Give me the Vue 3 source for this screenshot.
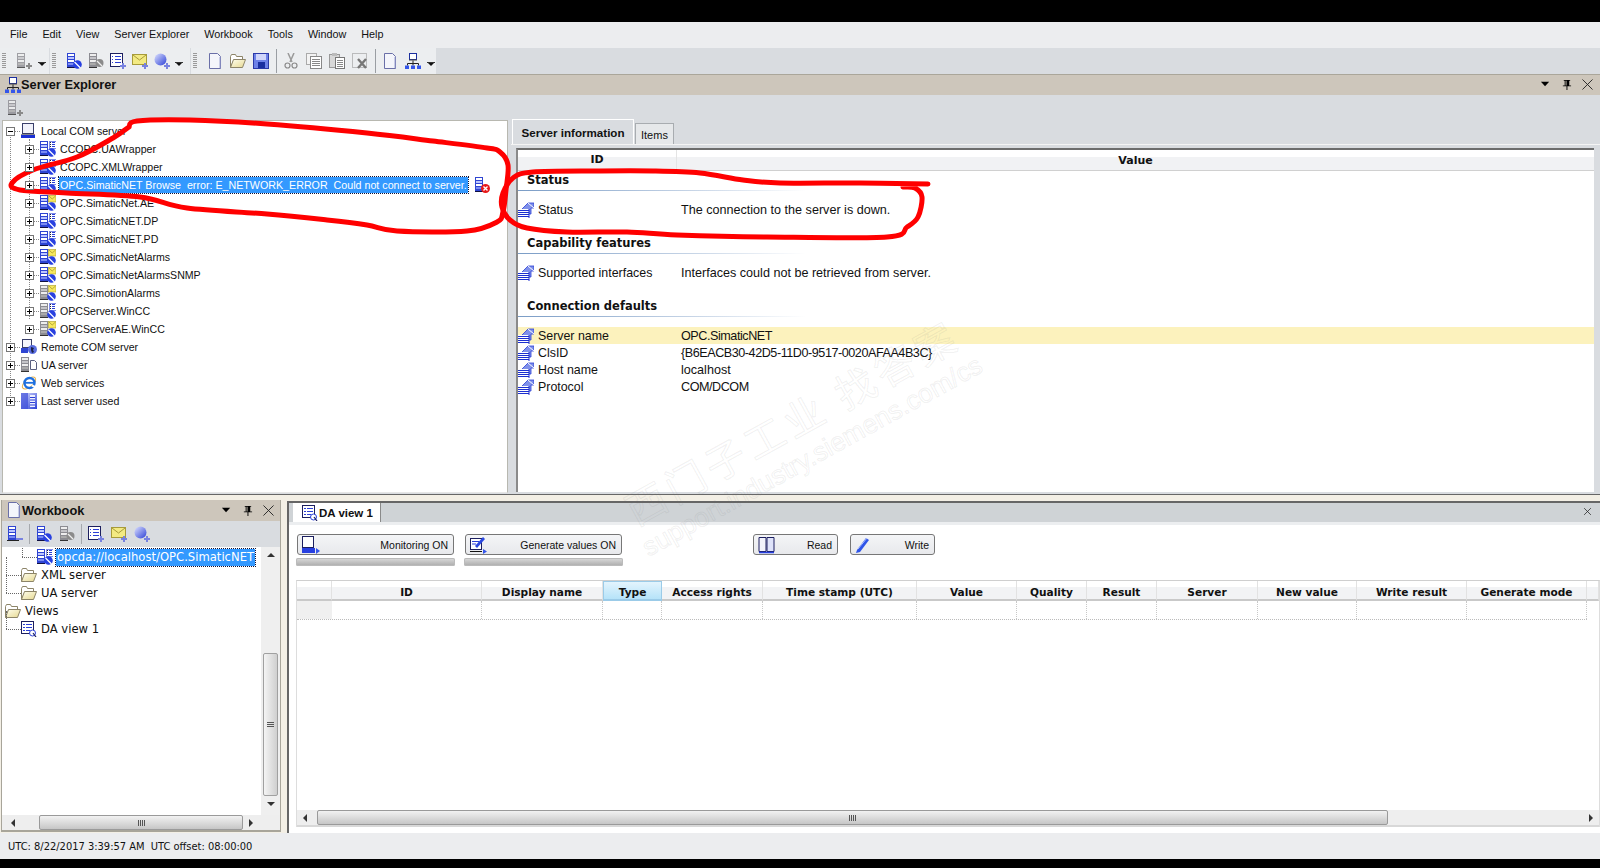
<script setup>
const menus = ['File', 'Edit', 'View', 'Server Explorer', 'Workbook', 'Tools', 'Window', 'Help']

const tb1 = ['i-srv-add']
const tb2 = ['i-srv-blue', 'i-srv-gray', 'i-list-add', 'i-env-add', 'i-globe-add']
const tb3a = ['i-doc', 'i-folder', 'i-floppy']
const tb3b = ['i-cut', 'i-copy', 'i-paste', 'i-del']
const tb3c = ['i-doc', 'i-net']

const children = [
  { t: 'CCOPC.UAWrapper', i: 'i-da' },
  { t: 'CCOPC.XMLWrapper', i: 'i-da' },
  { t: 'OPC.SimaticNET Browse  error: E_NETWORK_ERROR  Could not connect to server.', i: 'i-da', sel: true },
  { t: 'OPC.SimaticNet.AE', i: 'i-ae' },
  { t: 'OPC.SimaticNET.DP', i: 'i-da' },
  { t: 'OPC.SimaticNET.PD', i: 'i-da' },
  { t: 'OPC.SimaticNetAlarms', i: 'i-ae' },
  { t: 'OPC.SimaticNetAlarmsSNMP', i: 'i-ae' },
  { t: 'OPC.SimotionAlarms', i: 'i-gae' },
  { t: 'OPCServer.WinCC', i: 'i-gda' },
  { t: 'OPCServerAE.WinCC', i: 'i-gae' }
]
const roots = [
  { t: 'Remote COM server', i: 'i-remote' },
  { t: 'UA server', i: 'i-ua' },
  { t: 'Web services', i: 'i-ie' },
  { t: 'Last server used', i: 'i-last' }
]

const groups = [
  { h: 'Status', rows: [{ k: 'Status', v: 'The connection to the server is down.' }] },
  { h: 'Capability features', rows: [{ k: 'Supported interfaces', v: 'Interfaces could not be retrieved from server.' }] },
  {
    h: 'Connection defaults',
    rows: [
      { k: 'Server name', v: 'OPC.SimaticNET', hl: true, tight: true },
      { k: 'ClsID', v: '{B6EACB30-42D5-11D0-9517-0020AFAA4B3C}', tight: true },
      { k: 'Host name', v: 'localhost' },
      { k: 'Protocol', v: 'COM/DCOM', tight: true }
    ]
  }
]

const cols = [
  { t: '', w: 35 }, { t: 'ID', w: 150 }, { t: 'Display name', w: 121 }, { t: 'Type', w: 59, on: true },
  { t: 'Access rights', w: 101 }, { t: 'Time stamp (UTC)', w: 154 }, { t: 'Value', w: 100 },
  { t: 'Quality', w: 70 }, { t: 'Result', w: 70 }, { t: 'Server', w: 101 }, { t: 'New value', w: 99 },
  { t: 'Write result', w: 110 }, { t: 'Generate mode', w: 120 }
]

function smooth(pts) {
  let d = `M${pts[0][0]} ${pts[0][1]}`
  for (let i = 0; i < pts.length - 1; i++) {
    const p0 = pts[Math.max(0, i - 1)]
    const p1 = pts[i]
    const p2 = pts[i + 1]
    const p3 = pts[Math.min(pts.length - 1, i + 2)]
    const c1x = p1[0] + (p2[0] - p0[0]) / 6
    const c1y = p1[1] + (p2[1] - p0[1]) / 6
    const c2x = p2[0] - (p3[0] - p1[0]) / 6
    const c2y = p2[1] - (p3[1] - p1[1]) / 6
    d += ` C${c1x.toFixed(1)} ${c1y.toFixed(1)} ${c2x.toFixed(1)} ${c2y.toFixed(1)} ${p2[0]} ${p2[1]}`
  }
  return d
}
const loop1 = smooth([[129, 127], [137, 121], [190, 120], [267, 124], [367, 133], [433, 141], [487, 148], [500, 152], [508, 165], [506, 190], [503, 212], [497, 222], [467, 231], [397, 231], [367, 225], [327, 220], [267, 214], [187, 208], [140, 197], [67, 193], [20, 190], [12, 183], [33, 170], [77, 157], [113, 138], [129, 127]])
const loop2 = smooth([[928, 184], [860, 183], [780, 183], [743, 180], [700, 173], [653, 171], [600, 171], [533, 172], [513, 178], [503, 193], [502, 207], [510, 220], [527, 228], [567, 232], [627, 232], [677, 235], [767, 237], [887, 237], [907, 227], [918, 217], [922, 197], [915, 188], [903, 187]])
</script>

<template>
  <div class="app">
    <svg class="defs" width="0" height="0" aria-hidden="true">
      <defs>
        <linearGradient id="gBlue" x1="0" y1="0" x2="1" y2="1"><stop offset="0" stop-color="#dfe3ff" /><stop offset="1" stop-color="#2b3fd6" /></linearGradient>
        <linearGradient id="gFold" x1="0" y1="0" x2="1" y2="1"><stop offset="0" stop-color="#fffff0" /><stop offset="1" stop-color="#e6d890" /></linearGradient>
        <g id="towerBlue" shape-rendering="crispEdges">
          <rect x="0" y="0" width="8" height="15" fill="#2f45d2" />
          <rect x="1" y="1" width="6" height="2" fill="#fff" /><rect x="1" y="4" width="6" height="2" fill="#bcc6ff" />
          <rect x="1" y="7" width="6" height="2" fill="#fff" /><rect x="1" y="10" width="6" height="2" fill="#7b8cf2" />
          <rect x="0" y="14" width="8" height="1" fill="#101040" />
        </g>
        <g id="towerGray" shape-rendering="crispEdges">
          <rect x="0" y="0" width="8" height="15" fill="#8c8c92" />
          <rect x="1" y="1" width="6" height="2" fill="#eee" /><rect x="1" y="4" width="6" height="2" fill="#c4c4c8" />
          <rect x="1" y="7" width="6" height="2" fill="#eee" /><rect x="1" y="10" width="6" height="2" fill="#aaa" />
          <rect x="0" y="14" width="8" height="1" fill="#333" />
        </g>
        <g id="listMini" shape-rendering="crispEdges">
          <rect x="9" y="0" width="7" height="7" fill="#fff" stroke="#2b3fd6" stroke-width=".6" />
          <rect x="10" y="1" width="1" height="1" fill="#223" /><rect x="12" y="1" width="3" height="1" fill="#2b3fd6" />
          <rect x="10" y="3" width="1" height="1" fill="#223" /><rect x="12" y="3" width="3" height="1" fill="#2b3fd6" />
          <rect x="10" y="5" width="1" height="1" fill="#223" /><rect x="12" y="5" width="3" height="1" fill="#2b3fd6" />
        </g>
        <g id="envMini">
          <rect x="8.5" y="0.5" width="7.5" height="6.5" fill="#f6e85e" stroke="#b6a93a" stroke-width=".7" />
          <path d="M9 1l3.2 3 3.3-3" fill="none" stroke="#a89a30" stroke-width=".8" />
        </g>
        <g id="ball">
          <circle cx="11.5" cy="11.5" r="4.3" fill="#2840e0" />
          <path d="M8.5 9l6 6" stroke="#fff" stroke-width="1.3" />
        </g>
        <symbol id="i-da" viewBox="0 0 16 16"><use href="#towerBlue" /><use href="#listMini" /><use href="#ball" /></symbol>
        <symbol id="i-ae" viewBox="0 0 16 16"><use href="#towerBlue" /><use href="#envMini" /><use href="#ball" /></symbol>
        <symbol id="i-gda" viewBox="0 0 16 16"><use href="#towerGray" /><use href="#listMini" /><use href="#ball" /></symbol>
        <symbol id="i-gae" viewBox="0 0 16 16"><use href="#towerGray" /><use href="#envMini" /><use href="#ball" /></symbol>
        <symbol id="i-err" viewBox="0 0 16 16">
          <use href="#towerBlue" />
          <circle cx="10.5" cy="11.5" r="4.5" fill="#e81818" />
          <path d="M8.5 9.5l4 4m0-4l-4 4" stroke="#fff" stroke-width="1.4" />
        </symbol>
        <symbol id="i-local" viewBox="0 0 16 16">
          <rect x="1.5" y=".5" width="11" height="10" fill="#f1f2fa" stroke="#3a3f6a" />
          <rect x="0" y="11" width="14" height="1" fill="#888" />
          <rect x="0" y="12" width="14" height="3" fill="#1a2fd4" />
        </symbol>
        <symbol id="i-remote" viewBox="0 0 16 16">
          <rect x="1.5" y=".5" width="9" height="8" fill="#f4f5fb" stroke="#3a3f6a" />
          <rect x="0" y="9" width="7" height="5" fill="#2f45d2" />
          <circle cx="11.5" cy="10.5" r="4.5" fill="#5a6ee0" />
          <path d="M10 8l3 1-1 2 1 2-2 1-1-3z" fill="#1b2146" />
        </symbol>
        <symbol id="i-ua" viewBox="0 0 16 16">
          <use href="#towerGray" />
          <path d="M9.5 3.5h4l2 2v7h-6z" fill="#fff" stroke="#5a6080" />
        </symbol>
        <symbol id="i-ie" viewBox="0 0 16 16">
          <ellipse cx="8" cy="8" rx="8" ry="4" transform="rotate(-40 8 8)" fill="none" stroke="#e8b24a" stroke-width="1" />
          <circle cx="8.5" cy="8" r="5" fill="none" stroke="#1d6fe0" stroke-width="2.4" />
          <path d="M4 7.8h9" stroke="#1d6fe0" stroke-width="1.8" />
          <path d="M11 10.5l3 1.5" stroke="#fff" stroke-width="2" />
        </symbol>
        <symbol id="i-last" viewBox="0 0 16 16">
          <rect x="0" y="0" width="16" height="16" fill="url(#gBlue)" />
          <rect x="0" y="0" width="7" height="16" fill="#3a4cd8" opacity=".7" />
          <rect x="9" y="2" width="5" height="12" fill="#eef0ff" />
          <path d="M9 4.5h5M9 7h5M9 9.500h5M9 12h5" stroke="#2b3fd6" />
        </symbol>
        <symbol id="i-info" viewBox="0 0 16 16">
          <path d="M4 7L10 1h6v5h-3v6H4z" fill="#7f90ea" stroke="#2b3fd6" stroke-width=".8" />
          <path d="M10 1l6 5" stroke="#fff" />
          <rect x="0" y="7" width="11" height="9" fill="#fff" />
          <path d="M0 8.500h11M0 10.500h11M0 12.500h11M0 14.500h11" stroke="#1c2fd0" />
          <path d="M11 7v9" stroke="#1c2fd0" />
        </symbol>
        <symbol id="i-srv-add" viewBox="0 0 16 16">
          <g transform="translate(1 0)"><use href="#towerGray" opacity=".8" /></g>
          <path d="M10 13h6M13 10v6" stroke="#8a8a8a" stroke-width="2" />
        </symbol>
        <symbol id="i-srv-minus" viewBox="0 0 16 16">
          <g transform="translate(1 0)"><use href="#towerBlue" /></g>
          <rect x="0" y="14" width="12" height="1" fill="#222" />
          <path d="M9 13h7" stroke="#7882e0" stroke-width="2" />
        </symbol>
        <symbol id="i-srv-blue" viewBox="0 0 16 16"><g transform="translate(1 0)"><use href="#towerBlue" /></g><use href="#ball" /></symbol>
        <symbol id="i-srv-gray" viewBox="0 0 16 16">
          <g transform="translate(1 0)"><use href="#towerGray" /></g>
          <circle cx="11.500" cy="10" r="4" fill="#8b8b8b" />
          <path d="M9 8l5 5" stroke="#eee" stroke-width="1.200" />
        </symbol>
        <symbol id="i-list-add" viewBox="0 0 16 16">
          <rect x=".5" y=".5" width="12" height="13" fill="#fff" stroke="#1c1f60" />
          <path d="M2 3.500h1M5 3.500h6M2 6.500h1M5 6.500h6M2 9.500h1M5 9.500h6" stroke="#2b3fd6" />
          <path d="M10 13h6M13 10v6" stroke="#7882e0" stroke-width="2" />
        </symbol>
        <symbol id="i-env-add" viewBox="0 0 16 16">
          <rect x=".5" y="1.500" width="14" height="10" fill="#f3ea82" stroke="#a79b3a" />
          <path d="M1 2l6.500 5 6.500-5" fill="none" stroke="#a79b3a" />
          <path d="M10 13h6M13 10v6" stroke="#7882e0" stroke-width="2" />
        </symbol>
        <symbol id="i-globe-add" viewBox="0 0 16 16">
          <circle cx="6.500" cy="6.500" r="6" fill="url(#gBlue)" />
          <path d="M10 13h6M13 10v6" stroke="#7882e0" stroke-width="2" />
        </symbol>
        <symbol id="i-doc" viewBox="0 0 16 16">
          <path d="M2.500.5h8l3 3v12h-11z" fill="#f4f5fb" stroke="#6a6fa8" />
          <path d="M13 4v11" stroke="#9aa0d0" />
        </symbol>
        <symbol id="i-folder" viewBox="0 0 16 16">
          <path d="M.5 3.500l1-2h4l1 2h6v3H4l-3.500 8z" fill="#fff" stroke="#8c8468" />
          <path d="M.5 14.500l3-8h12l-3 8z" fill="url(#gFold)" stroke="#8c8468" />
        </symbol>
        <symbol id="i-floppy" viewBox="0 0 16 16">
          <rect x=".5" y=".5" width="15" height="15" fill="#6e82e8" stroke="#2b3aa8" />
          <rect x="3" y="1" width="10" height="6" fill="#d0d6fa" />
          <rect x="5" y="9" width="7" height="6" fill="#1a2fa0" />
        </symbol>
        <symbol id="i-cut" viewBox="0 0 16 16">
          <path d="M5 0l4 9M11 0L7 9" stroke="#9a9a9a" stroke-width="1.500" />
          <circle cx="4.500" cy="12.500" r="2.500" fill="none" stroke="#8a8a8a" stroke-width="1.200" />
          <circle cx="11.500" cy="12.500" r="2.500" fill="none" stroke="#8a8a8a" stroke-width="1.200" />
        </symbol>
        <symbol id="i-copy" viewBox="0 0 16 16">
          <rect x=".5" y=".5" width="10" height="11" fill="#f3f3f3" stroke="#aaa" />
          <rect x="4.500" y="3.500" width="11" height="12" fill="#fff" stroke="#888" />
          <path d="M6 6.500h8M6 8.500h8M6 10.500h8M6 12.500h8" stroke="#888" />
        </symbol>
        <symbol id="i-paste" viewBox="0 0 16 16">
          <rect x=".5" y="1.500" width="10" height="13" fill="#d8d8d8" stroke="#999" />
          <rect x="3" y="0" width="5" height="3" fill="#bbb" />
          <rect x="6.500" y="4.500" width="9" height="11" fill="#fff" stroke="#777" />
          <path d="M8 7.500h6M8 9.500h6M8 11.500h6M8 13.500h6" stroke="#888" />
        </symbol>
        <symbol id="i-del" viewBox="0 0 16 16">
          <rect x=".5" y=".5" width="14" height="14" fill="none" stroke="#888" stroke-dasharray="1 1" />
          <path d="M6 6l8 9m0-9l-8 9" stroke="#777" stroke-width="2.400" />
        </symbol>
        <symbol id="i-net" viewBox="0 0 16 16">
          <rect x="4.500" y=".5" width="7" height="6" fill="#fff" stroke="#1c2fa0" />
          <path d="M4 7h8" stroke="#444" />
          <path d="M8 7.500v3M2.500 10.500h11v2M2.500 10.500v2M8 10.500v2" fill="none" stroke="#222" />
          <rect x="0" y="12.500" width="4" height="3.500" fill="#3556ea" /><rect x="6" y="12.500" width="4" height="3.500" fill="#3556ea" /><rect x="12" y="12.500" width="4" height="3.500" fill="#3556ea" />
        </symbol>
        <symbol id="i-dv" viewBox="0 0 16 16">
          <rect x=".5" y=".5" width="12" height="12" fill="#fff" stroke="#1c1f60" />
          <path d="M2 3.500h2M5 3.500h6M2 6.500h2M5 6.500h6M2 9.500h2M5 9.500h4" stroke="#2b3fd6" />
          <circle cx="11.500" cy="12" r="3" fill="#fff" stroke="#2b3fd6" />
          <path d="M12 12l3 4" stroke="#1c1f60" stroke-width="1.200" />
        </symbol>
        <symbol id="i-mon" viewBox="0 0 18 18">
          <rect x=".5" y=".5" width="11" height="11" fill="#fff" stroke="#1c1f60" />
          <rect x="0" y="12" width="13" height="5" fill="#2840e0" />
          <path d="M14 12l4 3-4 3z" fill="#3556ea" />
        </symbol>
        <symbol id="i-gen" viewBox="0 0 18 18">
          <rect x=".5" y="2.500" width="11" height="11" fill="#fff" stroke="#1c1f60" />
          <path d="M2 5.500h7M2 8h4" stroke="#2b3fd6" />
          <path d="M5 10L13 1l2 2-8 9z" fill="#2b48e0" />
          <path d="M0 15.500h12" stroke="#111" />
          <path d="M13 13l4 2.500-4 2.500z" fill="#3556ea" />
        </symbol>
        <symbol id="i-book" viewBox="0 0 18 18">
          <path d="M1 1.500h7v14H1z" fill="#f2f3fb" stroke="#1c1f60" />
          <path d="M9 1.500h7v14H9z" fill="#dfe3fa" stroke="#1c1f60" />
          <path d="M1 16.500h15" stroke="#2840e0" stroke-width="1.500" />
        </symbol>
        <symbol id="i-pen" viewBox="0 0 18 18">
          <path d="M2 14l9-12 3 2-9 12-4 1z" fill="#2f55e8" />
          <path d="M3 13l9-11" stroke="#a9bcff" />
        </symbol>
      </defs>
    </svg>

    <div class="black-top"></div>

    <nav class="menu"><span v-for="m in menus" :key="m">{{ m }}</span></nav>

    <div class="toolbar">
      <div class="tgroup g1">
        <i class="grip"></i>
        <svg v-for="n in tb1" :key="n" class="tool"><use :href="'#' + n" x="3" y="5" width="16" height="16" /></svg>
        <i class="dd"></i>
      </div>
      <div class="tgroup g2">
        <i class="grip"></i>
        <svg v-for="n in tb2" :key="n" class="tool w22"><use :href="'#' + n" x="3" y="5" width="16" height="16" /></svg>
        <i class="dd"></i>
      </div>
      <div class="tgroup g3">
        <i class="grip"></i>
        <svg v-for="n in tb3a" :key="n" class="tool"><use :href="'#' + n" x="3" y="5" width="16" height="16" /></svg>
        <i class="tsep"></i>
        <svg v-for="n in tb3b" :key="n" class="tool"><use :href="'#' + n" x="3" y="5" width="16" height="16" /></svg>
        <i class="tsep"></i>
        <svg v-for="n in tb3c" :key="n" class="tool"><use :href="'#' + n" x="3" y="5" width="16" height="16" /></svg>
        <i class="dd"></i>
      </div>
    </div>

    <section class="explorer">
      <header class="title">
        <svg class="tico"><use href="#i-net" /></svg>
        <b>Server Explorer</b>
        <span class="wins">
          <svg class="wbtn" viewBox="0 0 12 8"><path d="M1 1h9L5.500 6z" /></svg>
          <svg class="wbtn" viewBox="0 0 12 12"><path d="M3 1h7v1H9v5h2v1H7v4H6V8H2V7h2V2H3zM5 2v5h1V2z" /></svg>
          <svg class="wbtn x" viewBox="0 0 12 12"><path d="M.5.500l11 11m0-11l-11 11" /></svg>
        </span>
      </header>
      <div class="subbar"><svg class="ic16 sub"><use href="#i-srv-add" /></svg></div>
      <div class="ex-body">
        <div class="tree">
          <i class="vguide a"></i>
          <i class="vguide b"></i>
          <div class="row">
            <i class="exp minus"></i><i class="dash"></i>
            <svg class="ic16"><use href="#i-local" /></svg>
            <span class="lbl">Local COM server</span>
          </div>
          <div v-for="c in children" :key="c.t" class="row l1">
            <i class="exp"></i><i class="dash"></i>
            <svg class="ic16"><use :href="'#' + c.i" /></svg>
            <span class="lbl" :class="{ sel: c.sel }">{{ c.t }}</span>
            <svg v-if="c.sel" class="ic16 erric"><use href="#i-err" /></svg>
          </div>
          <div v-for="r in roots" :key="r.t" class="row">
            <i class="exp"></i><i class="dash"></i>
            <svg class="ic16"><use :href="'#' + r.i" /></svg>
            <span class="lbl">{{ r.t }}</span>
          </div>
        </div>
        <div class="tabpane">
          <div class="tabs">
            <span class="tab on">Server information</span>
            <span class="tab">Items</span>
          </div>
          <div class="listbox">
            <div class="lhead"><span class="lid">ID</span><span class="lval">Value</span></div>
            <div v-for="g in groups" :key="g.h" class="group">
              <div class="ghead">{{ g.h }}</div>
              <div class="gline"></div>
              <div class="grows">
                <div v-for="r in g.rows" :key="r.k" class="irow" :class="{ hl: r.hl }">
                  <svg class="ic16"><use href="#i-info" /></svg>
                  <span class="k">{{ r.k }}</span>
                  <span class="v" :class="{ tight: r.tight }">{{ r.v }}</span>
                </div>
              </div>
            </div>
          </div>
        </div>
      </div>
    </section>

    <section class="lower">
      <aside class="workbook">
        <header class="title wtitle">
          <svg class="tico"><use href="#i-doc" /></svg>
          <b>Workbook</b>
          <span class="wins">
            <svg class="wbtn" viewBox="0 0 12 8"><path d="M1 1h9L5.500 6z" /></svg>
            <svg class="wbtn" viewBox="0 0 12 12"><path d="M3 1h7v1H9v5h2v1H7v4H6V8H2V7h2V2H3zM5 2v5h1V2z" /></svg>
            <svg class="wbtn x" viewBox="0 0 12 12"><path d="M.5.500l11 11m0-11l-11 11" /></svg>
          </span>
        </header>
        <div class="wbar">
          <svg class="ic16"><use href="#i-srv-minus" /></svg>
          <i class="wsep"></i>
          <svg class="ic16"><use href="#i-srv-blue" /></svg>
          <svg class="ic16"><use href="#i-srv-gray" /></svg>
          <i class="wsep"></i>
          <svg class="ic16"><use href="#i-list-add" /></svg>
          <svg class="ic16"><use href="#i-env-add" /></svg>
          <svg class="ic16"><use href="#i-globe-add" /></svg>
        </div>
        <div class="wmain">
          <div class="wtree">
            <div class="wrow w2"><i class="wdash"></i><svg class="ic16"><use href="#i-da" /></svg><span class="wlbl sel">opcda://localhost/OPC.SimaticNET</span></div>
            <div class="wrow w1"><i class="wdash"></i><svg class="ic16"><use href="#i-folder" /></svg><span class="wlbl">XML server</span></div>
            <div class="wrow w1"><i class="wdash"></i><svg class="ic16"><use href="#i-folder" /></svg><span class="wlbl">UA server</span></div>
            <div class="wrow w0"><svg class="ic16"><use href="#i-folder" /></svg><span class="wlbl">Views</span></div>
            <div class="wrow w1"><i class="wdash"></i><svg class="ic16"><use href="#i-dv" /></svg><span class="wlbl">DA view 1</span></div>
          </div>
          <div class="vscroll">
            <i class="arr up"></i>
            <i class="vspace"></i>
            <div class="vthumb"><i class="vgrip"></i></div>
            <i class="arr down"></i>
          </div>
        </div>
        <div class="hscroll wh">
          <i class="arr left"></i>
          <div class="hthumb"><i class="hgrip"></i></div>
          <i class="arr right"></i>
        </div>
      </aside>

      <main class="da">
        <div class="strip">
          <div class="dtab"><svg class="ic16"><use href="#i-dv" /></svg><b>DA view 1</b></div>
          <svg class="wbtn x stripx" viewBox="0 0 12 12"><path d="M1.500 1.500l9 9m0-9l-9 9" /></svg>
        </div>
        <div class="da-body">
          <div class="controls">
            <div class="ctl">
              <button class="btn"><svg class="ic18"><use href="#i-mon" /></svg><span>Monitoring ON</span></button>
              <div class="prog"></div>
            </div>
            <div class="ctl">
              <button class="btn"><svg class="ic18"><use href="#i-gen" /></svg><span>Generate values ON</span></button>
              <div class="prog"></div>
            </div>
            <button class="btn small read"><svg class="ic18"><use href="#i-book" /></svg><span>Read</span></button>
            <button class="btn small"><svg class="ic18"><use href="#i-pen" /></svg><span>Write</span></button>
          </div>
          <div class="grid">
            <div class="ghrow">
              <div v-for="c in cols" :key="c.t" class="gh" :class="{ on: c.on }" :style="{ width: c.w + 'px' }">{{ c.t }}</div>
              <div class="gh rest"></div>
            </div>
            <div class="gdrow">
              <div v-for="(c, i) in cols" :key="c.t" class="gd" :class="{ rh: i === 0 }" :style="{ width: c.w + 'px' }"></div>
            </div>
            <div class="gspace"></div>
            <div class="hscroll dh">
              <i class="arr left"></i>
              <div class="hthumb"><i class="hgrip"></i></div>
              <i class="arr right"></i>
            </div>
          </div>
        </div>
      </main>
    </section>

    <footer class="status">UTC: 8/22/2017 3:39:57 AM&nbsp; UTC offset: 08:00:00</footer>
    <div class="black-bottom"></div>

    <div class="wm wm1">西门子工业  找答案</div>
    <div class="wm wm2">support.industry.siemens.com/cs</div>

    <svg class="ink" width="1600" height="868" viewBox="0 0 1600 868">
      <path :d="loop1" />
      <path :d="loop2" />
    </svg>
  </div>
</template>

<style>
html, body { margin: 0; background: #000; }
</style>

<style scoped>
.app {
  position: relative; width: 1600px; height: 868px; overflow: hidden; background: #000;
  display: flex; flex-direction: column;
  font: 12px "Liberation Sans", Arial, sans-serif; color: #111;
}
.defs { position: absolute; }
.black-top { height: 22px; flex: none; }
.black-bottom { height: 9px; flex: none; }

.menu { height: 26px; flex: none; box-sizing: border-box; background: #ecedef; display: flex; align-items: center; padding: 0 0 2px 10px; gap: 15px; font-size: 10.800px; }

.toolbar { height: 26px; flex: none; background: #d9dce0; display: flex; gap: 1px; }
.tgroup { background: #eceef0; display: flex; align-items: stretch; }
.g1 { width: 49px; }
.g2 { width: 140px; }
.g3 { width: 245px; }
.grip { width: 4px; margin: 5px 7px 5px 2px; flex: none; background: repeating-linear-gradient(#9a9a9a 0 1px, transparent 1px 2px); }
.tool { width: 23px; height: 26px; flex: none; }
.tool.w22 { width: 22px; }
.dd { width: 13px; flex: none; position: relative; }
.dd::after { content: ""; position: absolute; left: 3px; top: 15px; border: 3px solid transparent; border-top: 3px solid #111; border-bottom: 0; }
.dd::before { content: ""; position: absolute; left: 2px; top: 14px; width: 8px; height: 1px; background: #333; }
.tsep { width: 1px; margin: 1px 3px 1px 3px; background: #9a9ea3; flex: none; }

.explorer { height: 421px; flex: none; display: flex; flex-direction: column; background: #d9dce0; border-bottom: 1px solid #666; box-sizing: border-box; }
.title { height: 21px; flex: none; box-sizing: border-box; background: #cdc6bb; border-top: 1px solid #aaa69a; display: flex; align-items: center; padding-left: 5px; padding-bottom: 1px; }
.title b { font-size: 12.800px; }
.tico { width: 16px; height: 16px; flex: none; }
.wins { margin-left: auto; display: flex; align-items: center; gap: 10px; padding-right: 7px; }
.wbtn { width: 11px; height: 11px; fill: #000; stroke: none; }
.wbtn.x { fill: none; stroke: #222; stroke-width: 1; }
.subbar { height: 25px; flex: none; display: flex; align-items: center; padding-left: 7px; }
.ic16 { width: 16px; height: 16px; flex: none; }
.ic18 { width: 18px; height: 18px; flex: none; }
.ex-body { flex: 1; min-height: 0; display: flex; padding-left: 2px; }

.tree { position: relative; width: 506px; height: 373px; box-sizing: border-box; background: #fff; border: 1px solid #b8b8b0; border-bottom-color: #e6e6e6; padding-top: 1px; font-size: 10.600px; flex: none; }
.row { height: 18px; display: flex; align-items: center; padding-left: 3px; position: relative; }
.row.l1 { padding-left: 22px; }
.exp { width: 9px; height: 9px; box-sizing: border-box; border: 1px solid #777; background: linear-gradient(#000,#000) center/5px 1px no-repeat, linear-gradient(#000,#000) center/1px 5px no-repeat, #fff; flex: none; position: relative; z-index: 1; }
.exp.minus { background: linear-gradient(#000,#000) center/5px 1px no-repeat, #fff; }
.dash { width: 5px; margin: 0 1px 0 0; border-top: 1px dotted #888; flex: none; }
.lbl { margin-left: 3px; padding: 0 1px; white-space: pre; }
.lbl.sel { background: #3399ff; color: #fff; outline: 1px dotted #113; line-height: 16px; font-size: 10.700px; }
.erric { margin-left: 7px; }
.vguide { position: absolute; border-left: 1px dotted #888; }
.vguide.a { left: 7px; top: 14px; height: 261px; }
.vguide.b { left: 26px; top: 18px; height: 180px; }

.tabpane { flex: 1; min-width: 0; padding-left: 3px; display: flex; flex-direction: column; }
.tabs { height: 25px; flex: none; display: flex; align-items: flex-end; padding-left: 1px; border-bottom: 1px solid #f4f4f4; box-sizing: border-box; }
.tab { height: 21px; line-height: 23px; box-sizing: border-box; padding: 0 5px; margin-left: 1px; background: #e6e8ea; border: 1px solid #a8acb0; border-bottom: 0; font-size: 11px; }
.tab.on { height: 25px; line-height: 26px; width: 122px; text-align: center; background: #d9dce0; border-color: #fff; margin-left: 0; font-weight: 700; font-size: 11.600px; padding: 0; }
.listbox { margin: 3px 6px 0 5px; height: 344px; background: #fff; border-top: 2px solid #6c6c6c; border-left: 2px solid #8a8a8a; box-sizing: border-box; }
.lhead { height: 20px; display: flex; align-items: center; font-weight: 700; font-family: "DejaVu Sans", sans-serif; font-size: 11px; background: linear-gradient(#fff 35%, #f1f2f4 36%); border-bottom: 1px solid #d0d0d0; }
.lid { width: 158px; text-align: center; border-right: 1px solid #e4e4e4; line-height: 20px; }
.lval { flex: 1; text-align: center; }
.ghead { height: 19px; line-height: 18px; padding-left: 9px; font-weight: 700; font-family: "DejaVu Sans", sans-serif; font-size: 11.500px; }
.gline { width: 288px; height: 1px; background: linear-gradient(90deg, #7a9cc6, #c6d4e6 60%, #fff); }
.grows { padding: 10px 0 15px; }
.group:last-child .grows { padding: 10px 0 0; }
.irow { height: 18px; display: flex; align-items: center; }
.group:last-child .irow { height: 17px; }
.irow.hl { background: #fcf2bd; }
.k { width: 143px; margin-left: 4px; flex: none; font-size: 12.400px; }
.v { font-size: 12.600px; white-space: nowrap; }
.v.tight { letter-spacing: -.45px; }

.lower { flex: 1; min-height: 0; display: flex; background: #f3efe5; }
.workbook { width: 280px; margin: 5px 0 1px 1px; flex: none; display: flex; flex-direction: column; background: #ececec; border: 1px solid #a8a59a; border-width: 0 1px 2px 1px; box-sizing: border-box; }
.wtitle { border-top: 0; height: 21px; padding-left: 4px; }
.wtitle .wins { gap: 10px; padding-right: 6px; }
.wbar { height: 26px; flex: none; background: #d9dce0; display: flex; align-items: center; padding-left: 5px; gap: 7px; }
.wsep { width: 1px; height: 20px; background: #a6a9ad; margin: 0 -1px; flex: none; }
.wmain { flex: 1; min-height: 0; display: flex; }
.wtree { flex: 1; min-width: 0; background: #fff; overflow: hidden; font-family: "DejaVu Sans", sans-serif; font-size: 11.600px; position: relative; padding-top: 1px; }
.wrow { height: 18px; display: flex; align-items: center; position: relative; }
.wrow.w0 { padding-left: 3px; }
.wrow.w1 { padding-left: 4px; }
.wrow.w2 { padding-left: 20px; }
.wdash { width: 15px; border-top: 1px dotted #666; flex: none; }
.wrow::before { content: ""; position: absolute; top: -9px; height: 18px; border-left: 1px dotted #666; }
.wrow.w0::before { display: none; }
.wrow.w1::before { left: 4px; }
.wrow.w2::before { left: 20px; }
.wlbl { margin-left: 4px; white-space: nowrap; }
.wrow.w2 .wlbl { margin-left: 3px; }
.wlbl.sel { background: #3399ff; color: #fff; outline: 1px dotted #113; line-height: 17px; padding: 0 1px; }

.vscroll { width: 19px; flex: none; background: #efefef; display: flex; flex-direction: column; align-items: center; }
.vspace { height: 96px; flex: none; }
.vthumb { width: 15px; height: 143px; flex: none; box-sizing: border-box; border: 1px solid #a0a0a0; border-radius: 2px; background: linear-gradient(90deg, #f4f4f4, #cfcfcf); display: flex; align-items: center; justify-content: center; }
.vgrip { width: 7px; height: 6px; background: repeating-linear-gradient(#555 0 1px, transparent 1px 2px); }
.arr { flex: none; width: 0; height: 0; border: 4px solid transparent; }
.arr.up { border-bottom-color: #333; border-top: 0; margin: 6px 0 0; }
.arr.down { border-top-color: #333; border-bottom: 0; margin: 6px 0 0; }
.arr.left { border-right-color: #333; border-left: 0; }
.arr.right { border-left-color: #333; border-right: 0; }
.hscroll { display: flex; align-items: center; background: #eeeeee; flex: none; }
.hthumb { box-sizing: border-box; border: 1px solid #9a9a9a; border-radius: 2px; background: linear-gradient(#f2f2f2, #c6c6c6); display: flex; align-items: center; justify-content: center; flex: none; }
.hgrip { width: 7px; height: 6px; background: repeating-linear-gradient(90deg, #555 0 1px, transparent 1px 2px); }
.wh { height: 15px; padding: 0 0 0 9px; }
.wh .hthumb { width: 204px; height: 15px; margin-left: 24px; margin-right: 6px; }
.dh { height: 15px; padding: 0 0 0 6px; border-bottom: 2px solid #d8d8d8; }
.dh .hthumb { width: 1071px; height: 15px; margin-left: 10px; margin-right: 201px; }

.da { flex: 1; min-width: 0; margin: 6px 0 0 6px; display: flex; flex-direction: column; background: #fff; border-top: 2px solid #666; border-left: 2px solid #666; box-sizing: border-box; }
.strip { height: 22px; flex: none; box-sizing: border-box; background: #cfd3d6; border-bottom: 3px solid #eceef0; display: flex; align-items: stretch; padding-left: 4px; }
.dtab { height: 19px; width: 88px; box-sizing: border-box; background: #fff; display: flex; align-items: center; padding-left: 9px; border-right: 1px solid #8a8a8a; gap: 1px; white-space: nowrap; font-size: 11.500px; flex: none; }
.stripx { margin: 4px 8px 0 auto; width: 9px; height: 9px; }
.da-body { flex: 1; min-height: 0; display: flex; flex-direction: column; padding: 9px 0 6px 7px; }
.controls { display: flex; align-items: flex-start; height: 46px; flex: none; }
.ctl { display: flex; flex-direction: column; width: 159px; margin-right: 9px; flex: none; }
.btn { box-sizing: border-box; height: 21px; width: 157px; margin: 0 1px; padding: 0 5px 0 4px; display: flex; align-items: center; justify-content: space-between; background: linear-gradient(#f4f5f7, #e8e9ec); border: 1px solid #777; border-radius: 3px; font: 10.500px "Liberation Sans", Arial, sans-serif; color: #111; }
.btn.small { width: 85px; margin: 0 12px 0 0; }
.btn.read { margin-left: 121px; }
.prog { height: 8px; margin-top: 3px; background: linear-gradient(#dcdcdc, #aaa); border-radius: 2px; box-shadow: inset 0 0 0 1px #bbb; }
.grid { flex: 1; min-height: 0; display: flex; flex-direction: column; border-top: 1px solid #cfcfcf; border-right: 1px solid #ddd; border-left: 1px solid #ddd; }
.ghrow { display: flex; height: 20px; flex: none; font-family: "DejaVu Sans", sans-serif; font-weight: 700; font-size: 10.600px; }
.gh { box-sizing: border-box; flex: none; text-align: center; line-height: 22px; white-space: nowrap; border-right: 1px solid #e2e2e2; border-bottom: 2px solid #c9c9c9; background: linear-gradient(#fff 35%, #f2f3f5 36%); }
.gh.on { background: linear-gradient(#e3f4fd, #b6e3f9); border: 1px solid #9bcbe8; border-bottom-width: 2px; line-height: 20px; }
.gh.rest { flex: 1; }
.gdrow { display: flex; height: 18px; flex: none; border-bottom: 1px dotted #bbb; width: 1290px; }
.gd { box-sizing: border-box; flex: none; border-right: 1px dotted #c8c8c8; }
.gd.rh { background: #f0f0f0; border-right: 0; }
.gspace { flex: 1; min-height: 0; }

.status { height: 26px; flex: none; background: #ecedef; display: flex; align-items: center; padding-left: 8px; font: 11px "DejaVu Sans Condensed", "DejaVu Sans", sans-serif; font-stretch: condensed; }

.wm { position: absolute; pointer-events: none; white-space: pre; color: transparent; -webkit-text-stroke: 1px rgba(120,120,120,.11); transform-origin: 0 100%; transform: rotate(-29deg); }
.wm1 { left: 642px; top: 479px; font: 40px "Noto Sans CJK SC", sans-serif; letter-spacing: 5px; }
.wm2 { left: 652px; top: 532px; font: 26.500px "Liberation Sans", sans-serif; }

.ink { position: absolute; left: 0; top: 0; pointer-events: none; }
.ink path { fill: none; stroke: #f00; stroke-width: 5; stroke-linejoin: round; stroke-linecap: round; }
</style>
